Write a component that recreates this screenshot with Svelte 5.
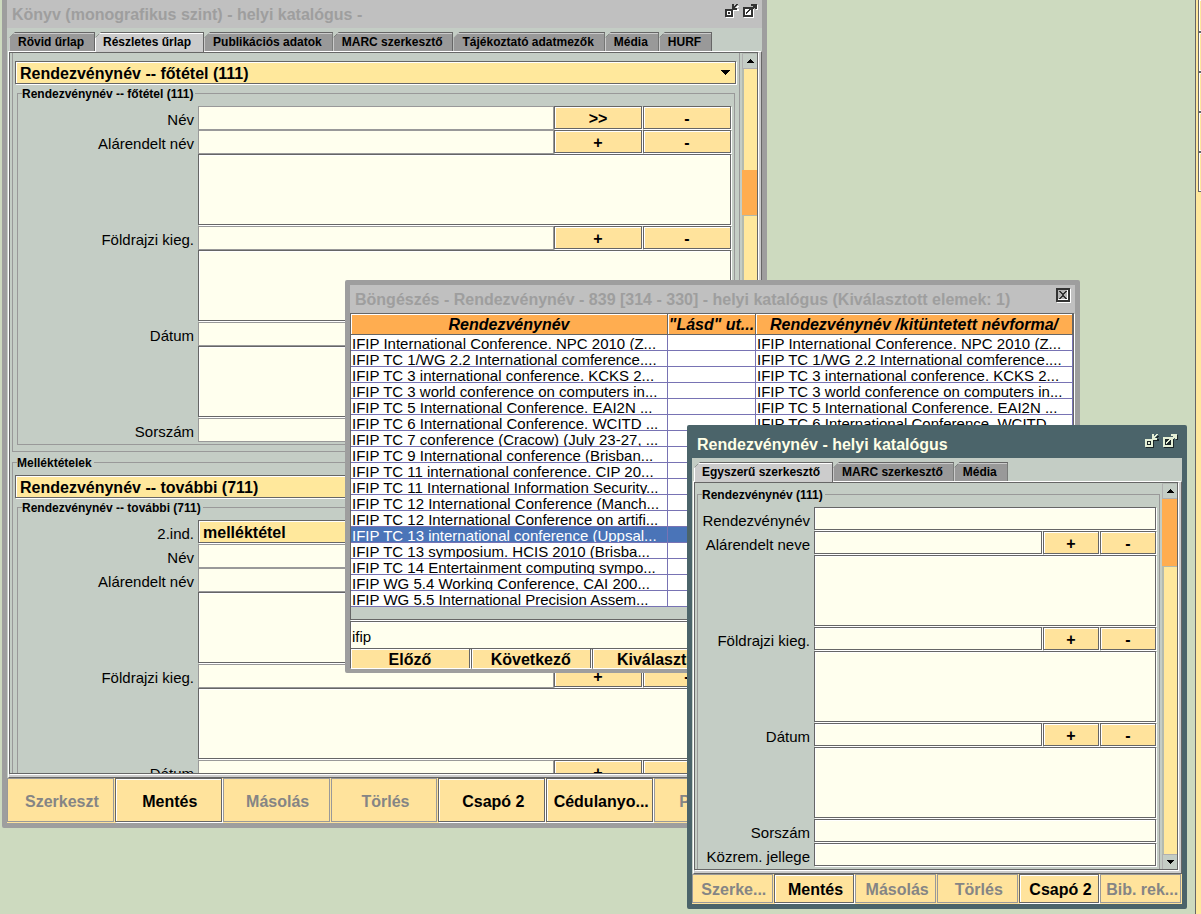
<script>
  const area = { area: true };
  const multi = (label, id, first = '+') => [{ label, id, actions: [first, '-'] }, area];

  const mainRows = [
    { label: 'Név', id: 'm-nev', actions: ['>>', '-'] },
    ...multi('Alárendelt név', 'm-alar'),
    ...multi('Földrajzi kieg.', 'm-fold'),
    ...multi('Dátum', 'm-datum'),
    { label: 'Sorszám', id: 'm-sor' }
  ];
  const addedRows = [
    { label: '2.ind.', id: 'a-ind', choice: 'melléktétel' },
    { label: 'Név', id: 'a-nev' },
    ...multi('Alárendelt név', 'a-alar'),
    ...multi('Földrajzi kieg.', 'a-fold'),
    ...multi('Dátum', 'a-datum')
  ];
  const authorityRows = [
    { label: 'Rendezvénynév', id: 'r-nev' },
    ...multi('Alárendelt neve', 'r-alar'),
    ...multi('Földrajzi kieg.', 'r-fold'),
    ...multi('Dátum', 'r-datum'),
    { label: 'Sorszám', id: 'r-sor' },
    { label: 'Közrem. jellege', id: 'r-koz' }
  ];

  const mainTabs = ['Rövid űrlap', 'Részletes űrlap', 'Publikációs adatok', 'MARC szerkesztő', 'Tájékoztató adatmezők', 'Média', 'HURF'];
  const authorityTabs = ['Egyszerű szerkesztő', 'MARC szerkesztő', 'Média'];

  const mainActions = [
    ['Szerkeszt', false], ['Mentés', true], ['Másolás', false], ['Törlés', false],
    ['Csapó 2', true], ['Cédulanyo...', true], ['P', false]
  ];
  const authorityActions = [
    ['Szerke...', false], ['Mentés', true], ['Másolás', false], ['Törlés', false],
    ['Csapó 2', true], ['Bib. rek...', false]
  ];

  const results = [
    'IFIP International Conference. NPC 2010 (Z...',
    'IFIP TC 1/WG 2.2 International comference....',
    'IFIP TC 3 international conference. KCKS 2...',
    'IFIP TC 3 world conference on computers in...',
    'IFIP TC 5 International Conference. EAI2N ...',
    'IFIP TC 6 International Conference. WCITD ...',
    'IFIP TC 7 conference (Cracow) (July 23-27, ...',
    'IFIP TC 9 International conference (Brisban...',
    'IFIP TC 11 international conference. CIP 20...',
    'IFIP TC 11 International Information Security...',
    'IFIP TC 12 International Conference (Manch...',
    'IFIP TC 12 International Conference on artifi...',
    'IFIP TC 13 international conference (Uppsal...',
    'IFIP TC 13 symposium. HCIS 2010 (Brisba...',
    'IFIP TC 14 Entertainment computing sympo...',
    'IFIP WG 5.4 Working Conference, CAI 200...',
    'IFIP WG 5.5 International Precision Assem...'
  ];
  let selected = $state(12);
  let query = $state('ifip');
</script>

{#snippet windowButtons()}
  <div class="winbtns">
    <button aria-label="Kis méret">
      <svg width="14" height="14" shape-rendering="crispEdges">
        <path class="lo" d="M1 7h8v7h-8zM8 2h1v3h5v2h-6zM12 2h2v1h-1v1h-2v-1h1z" />
        <path class="hi" d="M0 5h8v8h-8zM7 0h2v2h1v-1h1v-1h2v1h-1v1h-1v1h-1v1h2v2h-5z" />
        <path class="lo" d="M2 7h4v4h-4z" />
        <path class="hi" d="M3 8h2v2h-2z" />
      </svg>
    </button>
    <button aria-label="Teljes méret">
      <svg width="15" height="14" shape-rendering="crispEdges">
        <path class="lo" d="M1 5h10v9h-10zM13 1h2v5h-2z" />
        <path class="hi" d="M0 3h10v10h-10zM8 0h6v5h-2v-1h-1v1h-2v-2h1v-1h-2z" />
        <path class="lo" d="M2 5h6v6h-6z" />
        <path class="hi" d="M3 8h1v-1h1v-1h1v-1h2v1h-1v1h-1v1h-1v1h-1v1h-1z" />
      </svg>
    </button>
  </div>
{/snippet}

{#snippet tabs(names, current)}
  <div class="tabs" role="tablist">
    {#each names as name, i}
      <button class="tab" class:current={i === current} role="tab" aria-selected={i === current}>{name}</button>
    {/each}
  </div>
{/snippet}

{#snippet combo(id, value, label)}
  <div class="combo metal">
    <select {id} aria-label={label}><option>{value}</option></select>
    <svg width="10" height="5" shape-rendering="crispEdges"><path d="M0 0h10l-5 5z" /></svg>
  </div>
{/snippet}

{#snippet rows(items)}
  {#each items as row}
    {#if row.area}
      <textarea class="area metal" aria-label="Ismétlések"></textarea>
    {:else}
      <label class="name" for={row.id}>{row.label}</label>
      {#if row.choice}
        <div class="wide">{@render combo(row.id, row.choice)}</div>
      {:else}
        <input class="field" class:wide={!row.actions} id={row.id} type="text" />
        {#each row.actions ?? [] as action}
          <button class="btn metal">{action}</button>
        {/each}
      {/if}
    {/if}
  {/each}
{/snippet}

{#snippet scrollbar(before, thumb, after)}
  <div class="scrollbar">
    <button class="arrow" aria-label="Fel"><svg width="8" height="4" shape-rendering="crispEdges"><path d="M4 0l4 4h-8z" /></svg></button>
    <div class="track">
      <div style:flex-grow={before}></div>
      <div class="thumb" style:flex-grow={thumb}></div>
      <div style:flex-grow={after}></div>
    </div>
    <button class="arrow" aria-label="Le"><svg width="8" height="4" shape-rendering="crispEdges"><path d="M0 0h8l-4 4z" /></svg></button>
  </div>
{/snippet}

{#snippet footer(items)}
  <footer>
    {#each items as [name, enabled]}
      <button class="btn" class:metal={enabled} class:start={name.length === 1} disabled={!enabled}>{name}</button>
    {/each}
  </footer>
{/snippet}

<main>
  <aside>
    {#each [0, 1, 2, 3, 4] as n}<div class="slot"></div>{/each}
  </aside>

  <section class="window book">
    <header><h1>Könyv (monografikus szint) - helyi katalógus -</h1>{@render windowButtons()}</header>
    {@render tabs(mainTabs, 1)}
    <div class="pane">
      <div class="scroller metal">
        <div class="view">
          <div class="group first">
            {@render combo('c-111', 'Rendezvénynév -- főtétel (111)', 'Főtétel')}
            <fieldset class="sub">
              <legend>Rendezvénynév -- főtétel (111)</legend>
              <div class="rows">{@render rows(mainRows)}</div>
            </fieldset>
          </div>
          <fieldset class="group second">
            <legend>Melléktételek</legend>
            {@render combo('c-711', 'Rendezvénynév -- további (711)', 'Melléktétel')}
            <fieldset class="sub">
              <legend>Rendezvénynév -- további (711)</legend>
              <div class="rows">{@render rows(addedRows)}</div>
            </fieldset>
          </fieldset>
        </div>
        {@render scrollbar(101, 45, 542)}
      </div>
    </div>
    {@render footer(mainActions)}
  </section>

  <section class="window browse">
    <header>
      <h1>Böngészés - Rendezvénynév - 839 [314 - 330] - helyi katalógus (Kiválasztott elemek: 1)</h1>
      <button class="close" aria-label="Bezárás">
        <svg width="15" height="15" shape-rendering="crispEdges">
          <path fill="#fff" d="M1 1h14v14h-14z" />
          <path fill="#333" d="M0 0h14v14h-14z" />
          <path fill="#fff" d="M2 2h10v10h-10z" />
          <path fill="#b4b4b4" d="M2 2h9v9h-9z" />
          <path fill="#333" d="M3 3h2v1h1v1h2v-1h1v-1h2v1h-1v1h-1v1h-1v2h1v1h1v1h1v1h-2v-1h-1v-1h-2v1h-1v1h-2v-1h1v-1h1v-1h1v-2h-1v-1h-1v-1h-1z" />
        </svg>
      </button>
    </header>
    <div class="list metal">
      <table>
        <colgroup><col /><col class="see" /><col /></colgroup>
        <thead>
          <tr><th>Rendezvénynév</th><th>"Lásd" ut...</th><th>Rendezvénynév /kitüntetett névforma/</th></tr>
        </thead>
        <tbody>
          {#each results as name, i}
            <tr class:chosen={i === selected} onclick={() => (selected = i)}>
              <td><div>{name}</div></td><td><div></div></td><td><div>{name}</div></td>
            </tr>
          {/each}
        </tbody>
      </table>
    </div>
    <input class="query metal" type="text" aria-label="Keresés" bind:value={query} />
    <div class="pager">
      <button class="btn metal">Előző</button>
      <button class="btn metal">Következő</button>
      <button class="btn metal">Kiválaszt</button>
    </div>
  </section>

  <section class="window authority">
    <header><h1>Rendezvénynév - helyi katalógus</h1>{@render windowButtons()}</header>
    {@render tabs(authorityTabs, 0)}
    <div class="pane">
      <div class="scroller metal">
        <div class="view">
          <fieldset class="only">
            <legend>Rendezvénynév (111)</legend>
            <div class="rows">{@render rows(authorityRows)}</div>
          </fieldset>
        </div>
        {@render scrollbar(0, 67, 287)}
      </div>
    </div>
    {@render footer(authorityActions)}
  </section>
</main>

<style>
  :global(body) { margin: 0; overflow: hidden; }
  * { box-sizing: border-box; }
  button, input, select, textarea { font: inherit; color: inherit; margin: 0; padding: 0; border: 0; border-radius: 0; background: none; }

  main {
    position: relative;
    display: flex;
    justify-content: flex-end;
    height: 100vh;
    overflow: hidden;
    background: #cddabf;
    color: #000;
    font: 16px/18px "Liberation Sans", Arial, sans-serif;
  }
  aside { width: 6px; border-left: 1px solid #666; background: #ffe89c; padding-left: 2px; }
  .slot { height: 40px; border: 1px solid #666; border-right: 0; box-shadow: inset 1px 1px 0 #fff, inset 0 -1px 0 #fff; }
  .slot:first-child { height: 32px; border-top: 0; }

  .metal { border: 1px solid #666; box-shadow: inset 1px 1px 0 #fff, 1px 1px 0 #fff; }

  /* windows float freely on the desktop */
  .window { position: absolute; display: flex; flex-direction: column; border: 5px solid #9e9e9e; border-radius: 2px; background: #c4cdc5; }
  .book { left: 2px; top: -5px; width: 765px; height: 833px; }
  .browse { left: 345px; top: 280px; width: 735px; height: 393px; }
  .authority { left: 687px; top: 425px; width: 500px; height: 484px; border-color: #4b646a; }

  header { display: flex; justify-content: space-between; flex: none; height: 28px; padding: 0 4px 0 5px; background: #c0c0c0; color: #9e9e9e; }
  .authority header { background: #4b646a; color: #ffffe6; }
  h1 { margin: 0; font-size: 16px; line-height: 29px; font-weight: bold; white-space: nowrap; }
  .winbtns { display: flex; gap: 4px; padding-top: 4px; align-items: flex-start; }
  .winbtns button { display: flex; }
  .hi { fill: #333; }
  .lo { fill: #fff; }
  .authority .hi { fill: #e4efd6; }
  .authority .lo { fill: #1c2628; }
  .close { display: flex; padding-top: 3px; align-self: flex-start; }

  .tabs { display: flex; flex: none; height: 23px; padding: 4px 2px 0; }
  .tab {
    height: 19px; padding: 0 10px 0 9px; border-top: 1px solid #666; border-right: 1px solid #666;
    background: linear-gradient(135deg, #666 4px, #999 4px); box-shadow: inset 1px 1px 0 #ccc;
    clip-path: polygon(6px 0, 100% 0, 100% 100%, 0 100%, 0 6px);
    font-size: 12px; line-height: 17px; font-weight: bold; white-space: nowrap;
  }
  .tab.current { height: 20px; position: relative; z-index: 1; padding: 0 12px 0 8px; background: linear-gradient(135deg, #666 4px, #ccc 4px); box-shadow: inset 1px 1px 0 #fff; }

  .pane { flex: 1; min-height: 0; display: flex; margin-left: 1px; padding: 0 3px 3px 0; border: 1px solid; border-color: #fff #666 #666 #fff; background: #ccc; }
  .scroller { flex: 1; min-width: 0; display: flex; overflow: hidden; background: #c4cdc5; box-shadow: 1px 1px 0 #fff; }
  .view { flex: 1; min-width: 0; overflow: hidden; padding: 0 2px; }

  fieldset { min-width: 0; margin: 0; padding: 0; border: 1px solid #999; }
  legend { margin-left: 4px; padding: 2px 2px 0 0; font-size: 12px; line-height: 14px; font-weight: bold; }
  .group { border: 1px solid #999; }
  .first { border-top: 0; padding: 8px 0 6px; }
  .second { margin-top: 2px; padding-top: 5px; }
  .group > .combo { margin: 0 3px 1px 2px; }
  .sub { margin: 1px 4px 0; padding: 5px 2px 2px 0; }
  .only { margin-top: 3px; padding: 5px 2px 2px 0; }

  .rows { display: grid; grid-template-columns: 180px 1fr 89px 89px; }
  .authority .rows { grid-template-columns: 116px 1fr 57px 57px; }
  .name { height: 24px; padding-right: 4px; text-align: right; font-size: 15px; line-height: 28px; }
  .field { min-width: 0; width: 100%; height: 24px; padding: 0 3px; background: #ffffee; border: 1px solid #999; }
  .authority .field { width: auto; height: 23px; margin: 0 1px 1px 0; border-color: #666; box-shadow: inset 1px 1px 0 #fff, 1px 1px 0 #fff; }
  .wide { grid-column: 2 / -1; }
  .area { grid-column: 2 / -1; height: 71px; margin: 0 1px 1px 0; background: #ffffee; resize: none; }
  .rows .btn { height: 23px; margin: 0 1px 1px 0; padding-top: 2px; }
  .btn { background: #ffe39c; font-weight: bold; text-align: center; white-space: nowrap; overflow: hidden; }

  .combo { display: flex; align-items: center; height: 23px; padding-right: 5px; background: #ffe89c; }
  .combo select { flex: 1; min-width: 0; height: 21px; padding: 2px 0 0 4px; appearance: none; font-weight: bold; line-height: 19px; outline: 0; }
  .combo svg { flex: none; pointer-events: none; }
  .wide .combo { margin: 0 1px 1px 0; }

  .scrollbar { flex: none; display: flex; flex-direction: column; width: 15px; border-top: 1px solid #b4bbb4; }
  .arrow { flex: none; display: flex; align-items: center; justify-content: center; height: 15px; border: 1px solid #b0b0b0; border-width: 0 0 1px 1px; background: #c4cdc5; }
  .arrow:last-child { border-width: 1px 0 0 1px; }
  .track { flex: 1; display: flex; flex-direction: column; border-left: 2px solid #b4bbae; background: #ffe89c; }
  .thumb { margin-left: -2px; background: #ffad50; border-bottom: 1px solid #b4bbae; }

  footer { flex: none; display: grid; grid-auto-flow: column; grid-auto-columns: minmax(0, 1fr); height: 45px; background: #ffe39c; }
  .authority footer { height: 30px; }
  footer .btn { min-width: 0; margin: 0 1px 1px 0; padding: 3px 0 0 3px; }
  footer .btn:disabled { border: 1px solid #999; color: #858585; }
  footer .start { padding-left: 24px; text-align: left; }

  .list { flex: 1; min-height: 0; overflow: hidden; margin: 0 1px 1px 0; box-shadow: 1px 1px 0 #fff; }
  table { width: 100%; table-layout: fixed; border-collapse: separate; border-spacing: 0; }
  .see { width: 88px; }
  th { height: 21px; padding: 2px 0 0; background: #ffad50; border: 1px solid #666; border-width: 0 1px 1px 0; box-shadow: inset 1px 1px 0 #fff; font-style: italic; line-height: 18px; white-space: nowrap; }
  td { padding: 0; background: #fff; border: 1px solid #7873b4; border-width: 0 1px 1px 0; }
  td div { height: 15px; padding-left: 1px; overflow: hidden; font-size: 15px; line-height: 17px; white-space: nowrap; }
  .chosen td { background: #4a74b8; color: #fff; }
  .query { flex: none; width: auto; height: 28px; padding: 2px 1px 0; background: #ffffee; font-size: 15px; }
  .pager { flex: none; display: grid; grid-template-columns: repeat(6, 1fr); height: 19px; background: #c4cdc5; }
  .pager .btn { margin-right: 1px; padding-top: 2px; border-width: 0 1px; line-height: 18px; }
</style>
